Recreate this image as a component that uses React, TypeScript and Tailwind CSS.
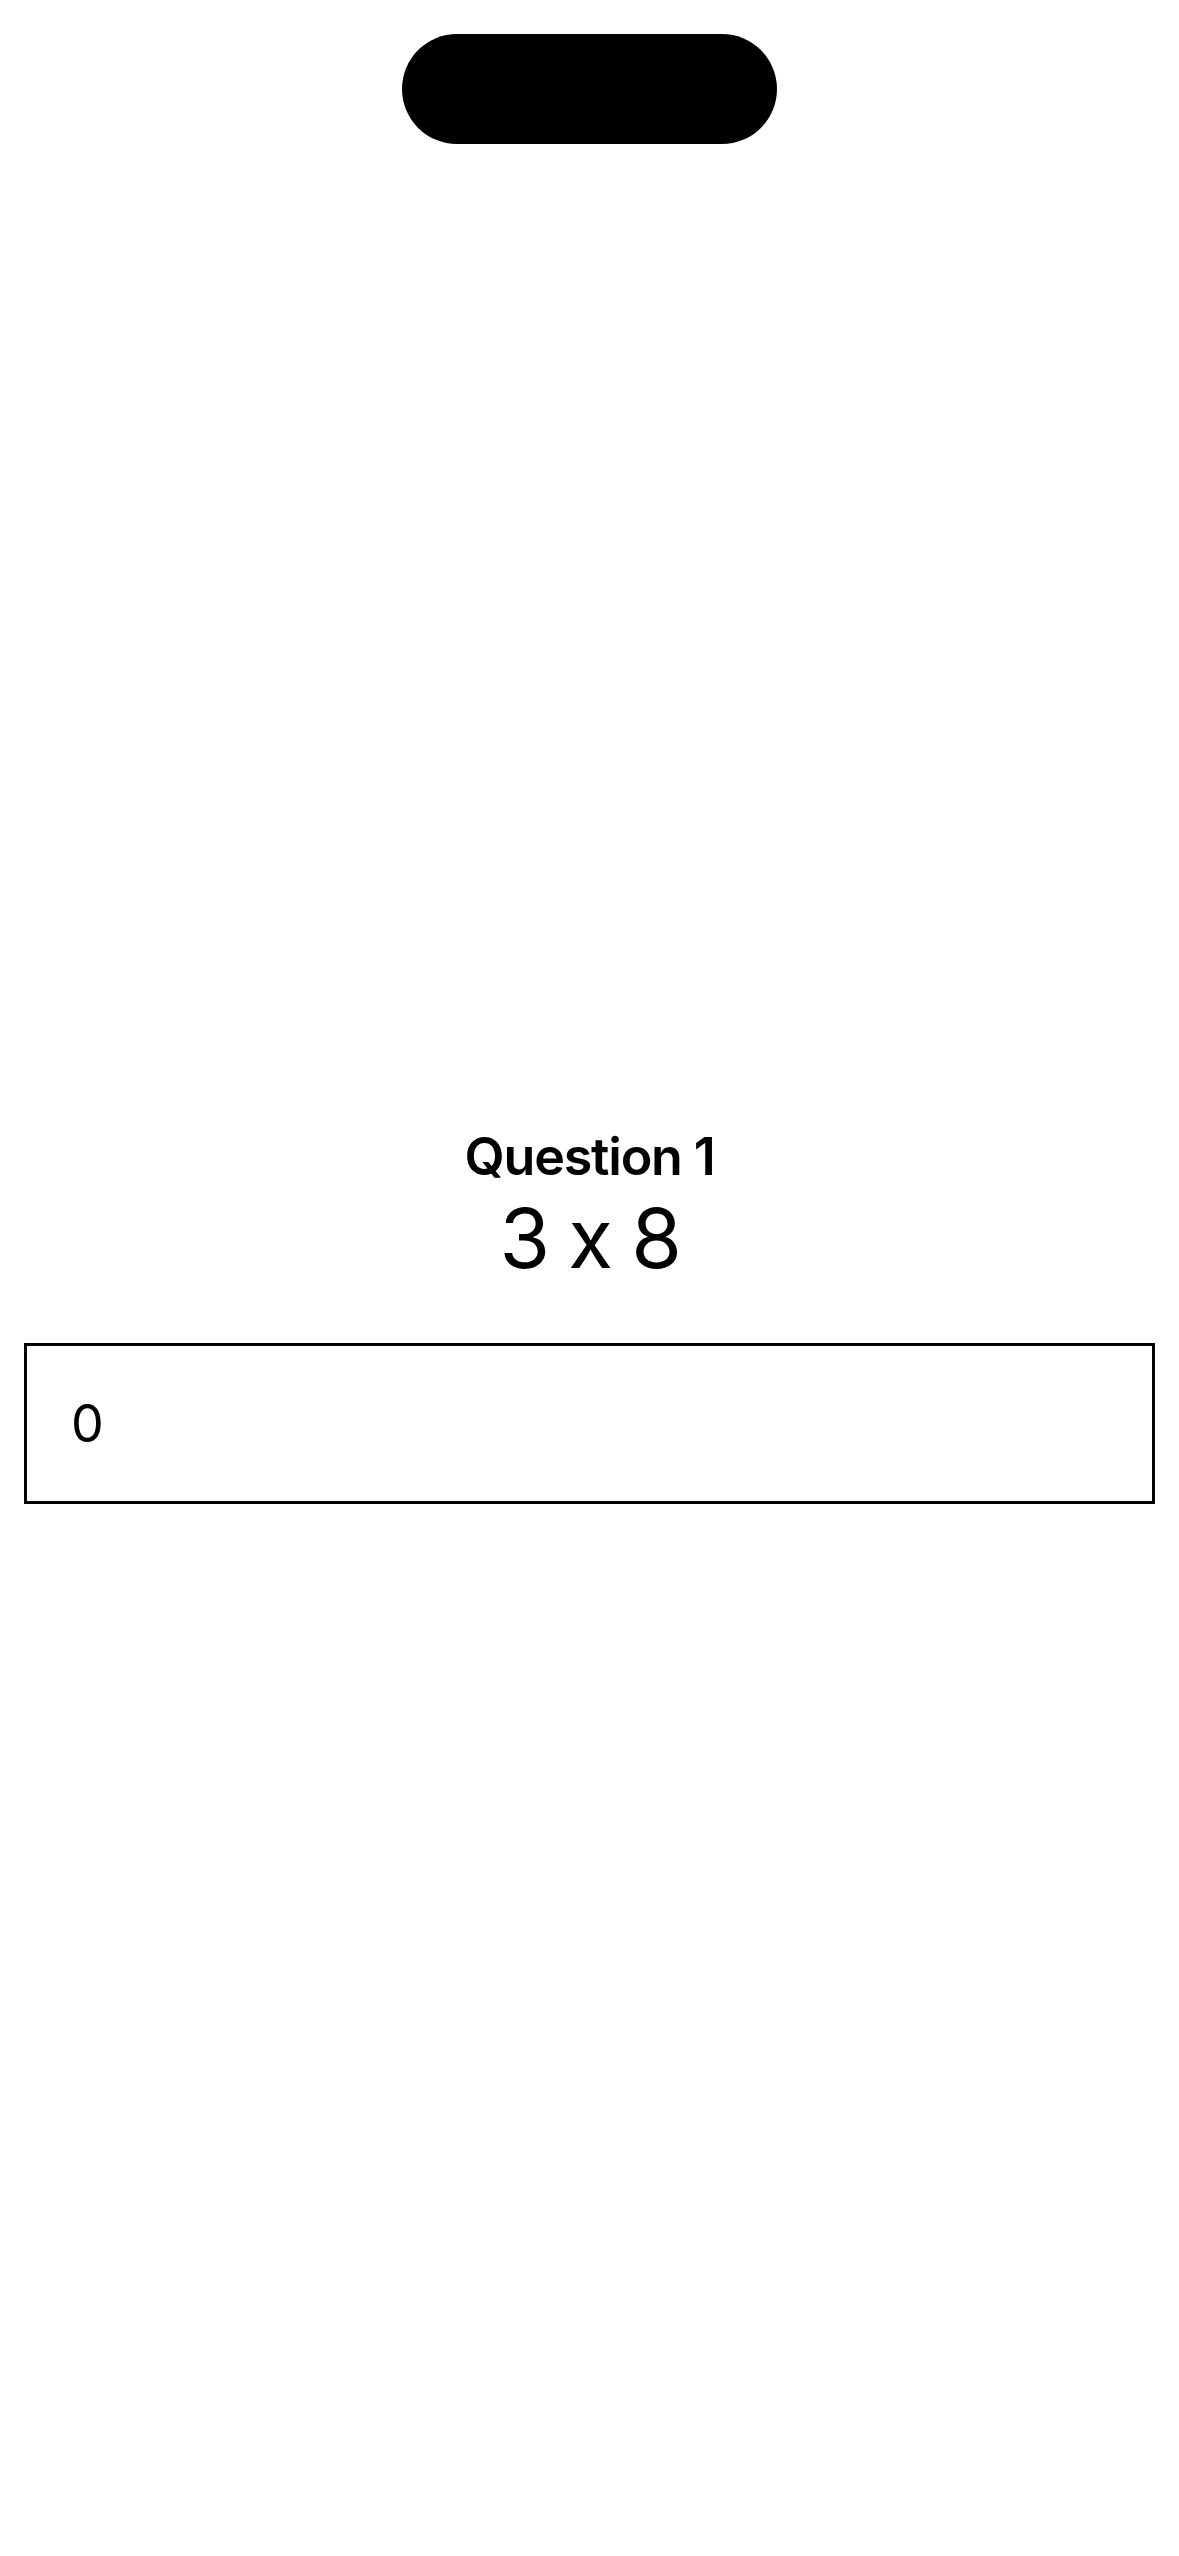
const App = () => {
  return (
    <div
      className="w-[1179px] h-[2556px] bg-white flex flex-col items-center text-black [font-feature-settings:'calt'_0]"
      style={{ fontFamily: "Inter, 'Noto Sans', sans-serif" }}
    >
      <div className="mt-[34px] w-[375px] h-[110px] rounded-[55px] bg-black" />
      <div className="mt-[981px] w-full flex flex-col items-center">
        <h2 className="text-[52px] leading-[64px] font-semibold tracking-[-1.2px]">Question 1</h2>
        <p className="mt-[2px] text-[82px] leading-[96px] font-normal tracking-[-2.5px]">3 x 8</p>
      </div>
      <div className="mt-[56px] w-full px-[24px]">
        <div className="h-[161px] border-[3px] border-black flex items-center pl-[44px]">
          <span className="text-[52px] leading-none font-normal">0</span>
        </div>
      </div>
    </div>
  );
};

export default App;
